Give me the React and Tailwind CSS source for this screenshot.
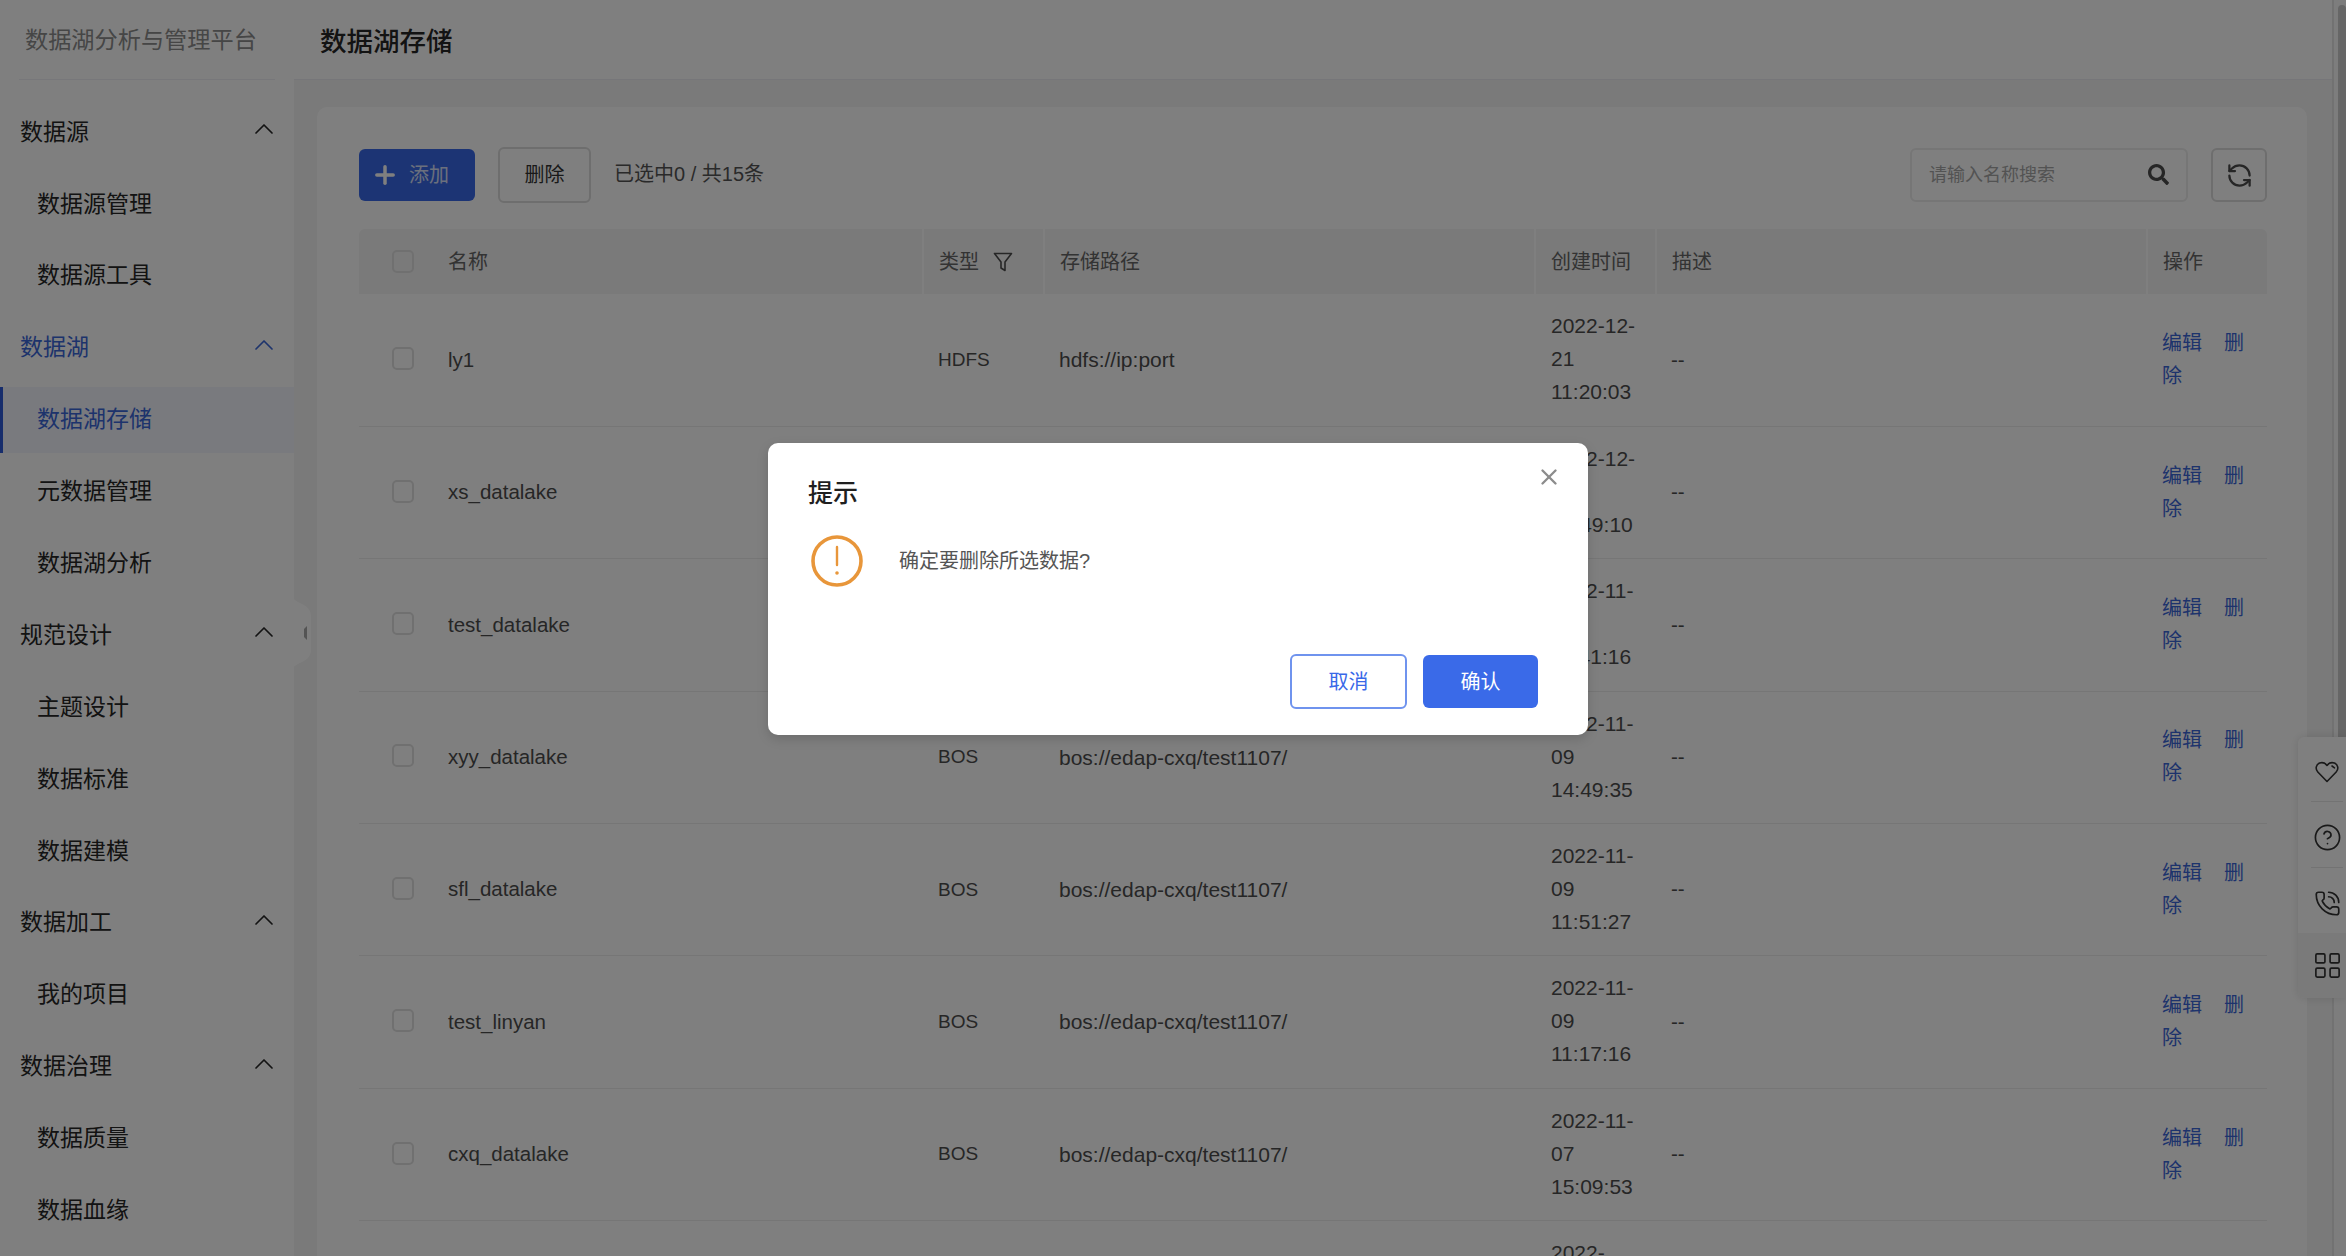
import React from 'react'
import { ChevronUp, CircleHelp, LayoutGrid, PhoneCall, Plus, RefreshCcw, X } from 'lucide-react'
import { FaSearch } from 'react-icons/fa'

const menu = [
  { title: '数据源', items: ['数据源管理', '数据源工具'] },
  { title: '数据湖', active: true, items: ['数据湖存储', '元数据管理', '数据湖分析'] },
  { title: '规范设计', items: ['主题设计', '数据标准', '数据建模'] },
  { title: '数据加工', items: ['我的项目'] },
  { title: '数据治理', items: ['数据质量', '数据血缘'] },
]

const rows = [
  { name: 'ly1', type: 'HDFS', path: 'hdfs://ip:port', time: '2022-12-21 11:20:03' },
  { name: 'xs_datalake', type: 'BOS', path: 'bos://edap-cxq/test1107/', time: '2022-12-15 19:49:10' },
  { name: 'test_datalake', type: 'BOS', path: 'bos://edap-cxq/test1107/', time: '2022-11-16 11:41:16' },
  { name: 'xyy_datalake', type: 'BOS', path: 'bos://edap-cxq/test1107/', time: '2022-11-09 14:49:35' },
  { name: 'sfl_datalake', type: 'BOS', path: 'bos://edap-cxq/test1107/', time: '2022-11-09 11:51:27' },
  { name: 'test_linyan', type: 'BOS', path: 'bos://edap-cxq/test1107/', time: '2022-11-09 11:17:16' },
  { name: 'cxq_datalake', type: 'BOS', path: 'bos://edap-cxq/test1107/', time: '2022-11-07 15:09:53' },
  { name: '', type: '', path: '', time: '2022-' },
]

function Sidebar() {
  return (
    <aside className="relative z-10 w-[294px] shrink-0 bg-white">
      <div className="mx-[19px] h-[80px] border-b border-[#eeeef4] pt-[20px] pl-[6px] text-[23.2px] leading-[40px] text-[#8c8c8c] whitespace-nowrap">
        数据湖分析与管理平台
      </div>
      <nav className="pt-[16px]">
        {menu.map((group) => (
          <div key={group.title}>
            <div className={`flex h-[71.9px] items-center justify-between pl-[20px] pr-[14px] text-[23px] ${group.active ? 'text-[#3a66d8]' : 'text-[#262626]'}`}>
              <span>{group.title}</span>
              <ChevronUp size={32} strokeWidth={1.3} className="mb-[6px]" />
            </div>
            {group.items.map((item) => {
              const on = item === '数据湖存储'
              return (
                <div key={item} className="flex h-[71.9px] items-center">
                  <div className={`flex h-[66px] w-full items-center text-[23px] ${on ? 'border-l-[3px] border-[#2f5bd8] bg-[#f2f5fd] pl-[34px] text-[#3a66d8]' : 'pl-[37px] text-[#262626]'}`}>
                    {item}
                  </div>
                </div>
              )
            })}
          </div>
        ))}
      </nav>
      {/* collapse handle */}
      <div className="absolute top-[598px] left-[293px]">
        <svg width="20" height="70" viewBox="0 0 20 70">
          <path d="M0 0 C4 6 18 6 18 18 L18 52 C18 64 4 64 0 70 Z" fill="#ffffff" />
          <path d="M14 28 L11 31 L11 39 L14 42 Z" fill="#a8a8a8" />
        </svg>
      </div>
    </aside>
  )
}

function Checkbox() {
  return <span className="block h-[23px] w-[22px] rounded-[5px] border-2 border-[#e0e0e0]" />
}

function RowActions() {
  return (
    <span className="text-[20px] leading-[33px] text-[#3a66d8]">
      <span>编辑</span>
      <span className="ml-[22px]">删</span>
      <span>除</span>
    </span>
  )
}

function DataTable() {
  return (
    <table className="w-[1908px] table-fixed border-collapse text-left text-[20.5px] text-[#4d4d4d]">
      <colgroup>
        <col className="w-[89px]" />
        <col className="w-[475px]" />
        <col className="w-[121px]" />
        <col className="w-[491px]" />
        <col className="w-[121px]" />
        <col className="w-[491px]" />
        <col className="w-[120px]" />
      </colgroup>
      <thead>
        <tr className="h-[65px] bg-[#f4f4f4] text-[20px] text-[#666666]">
          <th className="rounded-tl-[6px] pl-[33px] font-normal"><Checkbox /></th>
          <th className="font-normal">名称</th>
          <th className="border-l-2 border-white pl-[15px] font-normal">
            <span className="flex items-center gap-[14px]">
              类型
              <svg width="20" height="20" viewBox="0 0 20 20" fill="none" stroke="#4d4d4d" strokeWidth="1.6" strokeLinejoin="round">
                <path d="M1.5 1.5 H18.5 L12 10 V18.5 L8 16 V10 Z" />
              </svg>
            </span>
          </th>
          <th className="border-l-2 border-white pl-[15px] font-normal">存储路径</th>
          <th className="border-l-2 border-white pl-[15px] font-normal">创建时间</th>
          <th className="border-l-2 border-white pl-[15px] font-normal">描述</th>
          <th className="rounded-tr-[6px] border-l-2 border-white pl-[15px] font-normal">操作</th>
        </tr>
      </thead>
      <tbody>
        {rows.map((row) => (
          <tr key={row.time} className="h-[132.4px] border-b border-[#ececec]">
            <td className="pb-[3px] pl-[33px]">{row.name && <Checkbox />}</td>
            <td>{row.name}</td>
            <td className="pl-[15px] text-[19px]">{row.type}</td>
            <td className="pl-[15px] text-[21px]">{row.path}</td>
            <td className="pt-[15px] pr-[13px] pl-[16px] align-top text-[21px] leading-[33px]">{row.time}</td>
            <td className="pl-[15px]">{row.name && '--'}</td>
            <td className="pl-[15px] pr-[14px]">{row.name && <RowActions />}</td>
          </tr>
        ))}
      </tbody>
    </table>
  )
}

function Toolbar() {
  return (
    <div className="flex h-[122px] items-center justify-between pt-[14px] text-[20px]">
      <div className="flex items-center">
        <button className="flex h-[52px] w-[116px] items-center rounded-[6px] bg-[#3868e8] pl-[12px] text-white">
          <Plus size={28} strokeWidth={3} />
          <span className="ml-[10px] opacity-80">添加</span>
        </button>
        <button className="ml-[23px] h-[56px] w-[93px] rounded-[6px] border-2 border-[#dcdcdc] text-[#333333]">删除</button>
        <span className="mb-[2px] ml-[23px] text-[#555555]">已选中0 / 共15条</span>
      </div>
      <div className="flex items-center">
        <div className="flex h-[54px] w-[278px] items-center justify-between rounded-[6px] border-2 border-[#ececec] px-[17px]">
          <span className="mt-[1px] text-[18px] text-[#a6a6a6]">请输入名称搜索</span>
          <FaSearch size={21} className="mb-[2px] text-[#4d4d4d]" />
        </div>
        <button className="ml-[23px] flex h-[54px] w-[56px] items-center justify-center rounded-[6px] border-2 border-[#dcdcdc] text-[#4d4d4d]">
          <RefreshCcw size={27} strokeWidth={2} />
        </button>
      </div>
    </div>
  )
}

function FloatPanel() {
  return (
    <div className="absolute top-[737px] right-0 z-10 w-[48px] overflow-hidden rounded-l-[6px] bg-white text-[#333333] shadow-[0_0_10px_rgba(0,0,0,0.12)]">
      <div className="mr-[3px] ml-[13px] flex h-[65px] items-center justify-center border-b border-[#e6e6e6] pt-[6px]">
        <svg width="24" height="22" viewBox="0 0 24 22" fill="none" stroke="currentColor" strokeWidth="1.6" strokeLinejoin="round" strokeLinecap="round">
          <path d="M12 20.5 L2.8 11 C0 8 1 3.2 4.6 2 C7.4 1.1 10.2 2 12 4.4 C13.8 2 16.6 1.1 19.4 2 C23 3.2 24 8 21.2 11 Z" />
          <path d="M17 5 L19.5 6.8" />
        </svg>
      </div>
      <div className="mr-[3px] ml-[13px] flex h-[66px] items-center justify-center border-b border-[#e6e6e6] pt-[6px]">
        <CircleHelp size={29} strokeWidth={1.4} />
      </div>
      <div className="mr-[3px] ml-[13px] flex h-[65px] items-center justify-center pt-[6px]">
        <PhoneCall size={27} strokeWidth={1.5} />
      </div>
      <div className="flex h-[65px] items-center justify-center bg-[#f5f5f5] pl-[10px]">
        <LayoutGrid size={31} strokeWidth={1.3} />
      </div>
    </div>
  )
}

function ConfirmDialog() {
  return (
    <div className="absolute inset-0 z-20 bg-black/50">
      <div className="absolute top-[443px] left-[768px] h-[292px] w-[820px] rounded-[10px] bg-white pt-[32px] pr-[50px] pl-[40px] shadow-[0_4px_12px_rgba(0,0,0,0.15)]">
        <X size={26} strokeWidth={2.2} className="absolute top-[21px] right-[26px] text-[#8c8c8c]" />
        <h3 className="text-[25px] leading-[36px] font-medium text-[#1f1f1f]">提示</h3>
        <div className="mt-[24px] ml-[3px] flex items-center">
          <svg width="52" height="52" viewBox="0 0 52 52" fill="none" stroke="#e8963a" strokeWidth="3.6" strokeLinecap="round">
            <circle cx="26" cy="26" r="24" />
            <path d="M26 12 V30" strokeWidth="2.4" />
            <circle cx="26" cy="38" r="1" fill="#e8963a" strokeWidth="1.6" />
          </svg>
          <span className="ml-[36px] text-[20px] text-[#555555]">确定要删除所选数据?</span>
        </div>
        <div className="mt-[67px] flex items-center justify-end gap-[16px]">
          <button className="h-[55px] w-[117px] rounded-[6px] border-2 border-[#6f93ee] bg-white text-[20px] text-[#3868e8]">取消</button>
          <button className="h-[53px] w-[115px] rounded-[6px] bg-[#3a6ae8] text-[20px] text-white">确认</button>
        </div>
      </div>
    </div>
  )
}

export default function App() {
  return (
    <div className="relative flex h-[1256px] overflow-hidden bg-[#f4f4f4] font-['Liberation_Sans','Noto_Sans_CJK_SC',sans-serif]">
      <Sidebar />
      <main className="min-w-0 flex-1">
        <header className="flex h-[80px] items-center border-b border-[#ececf2] bg-white pt-[6px] pl-[26px] text-[26.5px] font-medium text-[#262626]">
          数据湖存储
        </header>
        <div className="mt-[27px] ml-[23px] w-[1990px] rounded-t-[10px] bg-white pr-[40px] pl-[42px]">
          <Toolbar />
          <DataTable />
        </div>
      </main>
      {/* scrollbar */}
      <div className="absolute top-0 right-0 h-full w-[14px] border-l-2 border-[#e4e4e4] bg-[#fbfbfb]">
        <div className="mt-[5px] ml-auto h-[900px] w-[8px] rounded-t-[6px] bg-[#cccccc]" />
      </div>
      <div className="absolute top-0 left-0 h-[2px] w-[80px] bg-[#5b7fe0]" />
      <FloatPanel />
      <ConfirmDialog />
    </div>
  )
}
